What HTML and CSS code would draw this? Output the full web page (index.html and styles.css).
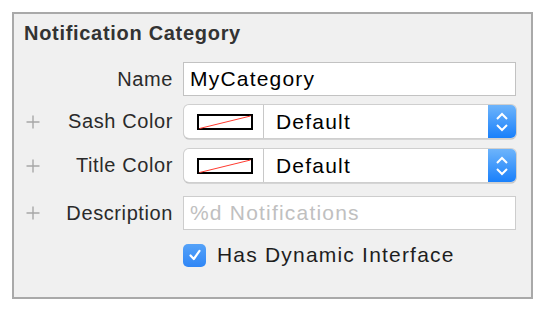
FILE: index.html
```html
<!DOCTYPE html>
<html>
<head>
<meta charset="utf-8">
<link rel="stylesheet" href="styles.css">
</head>
<body>
<div class="panel">
  <div class="title">Notification Category</div>
  <div class="row row-name">
    <span class="plus"></span>
    <span class="label">Name</span>
    <div class="field"><span class="value">MyCategory</span></div>
  </div>
  <div class="row row-sash">
    <span class="plus"><svg width="14" height="14" viewBox="0 0 14 14"><path d="M7 0.5V13.5M0.5 7H13.5" stroke="#a7a7a7" stroke-width="1.4"/></svg></span>
    <span class="label">Sash Color</span>
    <div class="popup">
      <div class="swatch-cell">
        <svg class="swatch" width="56" height="16" viewBox="0 0 56 16"><rect x="1" y="1" width="54" height="14" fill="#fff" stroke="#000" stroke-width="2"/><path d="M2.5 14.5L53.5 2" stroke="#ff3b30" stroke-width="1"/></svg>
      </div>
      <div class="popup-text">Default</div>
      <div class="stepper"><svg width="14" height="20" viewBox="0 0 14 20"><path d="M2 7L7 2L12 7M2 13L7 18L12 13" fill="none" stroke="#fff" stroke-width="2"/></svg></div>
    </div>
  </div>
  <div class="row row-title">
    <span class="plus"><svg width="14" height="14" viewBox="0 0 14 14"><path d="M7 0.5V13.5M0.5 7H13.5" stroke="#a7a7a7" stroke-width="1.4"/></svg></span>
    <span class="label">Title Color</span>
    <div class="popup">
      <div class="swatch-cell">
        <svg class="swatch" width="56" height="16" viewBox="0 0 56 16"><rect x="1" y="1" width="54" height="14" fill="#fff" stroke="#000" stroke-width="2"/><path d="M2.5 14.5L53.5 2" stroke="#ff3b30" stroke-width="1"/></svg>
      </div>
      <div class="popup-text">Default</div>
      <div class="stepper"><svg width="14" height="20" viewBox="0 0 14 20"><path d="M2 7L7 2L12 7M2 13L7 18L12 13" fill="none" stroke="#fff" stroke-width="2"/></svg></div>
    </div>
  </div>
  <div class="row row-desc">
    <span class="plus"><svg width="14" height="14" viewBox="0 0 14 14"><path d="M7 0.5V13.5M0.5 7H13.5" stroke="#a7a7a7" stroke-width="1.4"/></svg></span>
    <span class="label">Description</span>
    <div class="field field-light"><span class="placeholder">%d Notifications</span></div>
  </div>
  <div class="row row-check">
    <span class="plus"></span>
    <span class="label"></span>
    <div class="check-wrap">
      <span class="checkbox"><svg width="14" height="14" viewBox="0 0 14 14"><path d="M2.5 7.5L5.8 11L11.5 2.8" fill="none" stroke="#fff" stroke-width="2.2" stroke-linecap="round" stroke-linejoin="round"/></svg></span>
      <span class="check-label">Has Dynamic Interface</span>
    </div>
  </div>
</div>
</body>
</html>
```
FILE: styles.css
```css
html, body {
  margin: 0;
  padding: 0;
  background: #ffffff;
}
body {
  font-family: "Liberation Sans", Arial, sans-serif;
}
.panel {
  margin: 12px 0 0 12px;
  width: 517px;
  height: 283px;
  border: 2px solid #a9a9a9;
  background: #f0f0f0;
  box-sizing: content-box;
}
.title {
  padding: 7px 0 0 10px;
  height: 27px;
  font-size: 20px;
  font-weight: bold;
  letter-spacing: 0.7px;
  color: #333333;
  line-height: 24px;
}
.row {
  display: flex;
  align-items: center;
  padding: 0 15px 0 10px;
}
.plus {
  width: 18px;
  flex: none;
  display: flex;
  justify-content: center;
}
.plus svg { display: block; }
.label {
  flex: 1;
  text-align: right;
  font-size: 20px;
  letter-spacing: 0.6px;
  color: #2a2a2a;
  padding-right: 10px;
}
.field {
  width: 333px;
  height: 34px;
  box-sizing: border-box;
  background: #ffffff;
  border: 1px solid #c2c2c2;
  display: flex;
  align-items: center;
  padding-left: 6px;
  font-size: 21px;
  letter-spacing: 1.2px;
}
.field-light { border-color: #cdcdcd; }
.value { color: #000000; }
.placeholder { color: #c0c0c0; }
.row-name { margin-top: 14px; }
.row-sash { margin-top: 9px; }
.row-title { margin-top: 11px; }
.row-desc { margin-top: 14px; }
.row-check { margin-top: 13px; }
.popup {
  width: 332px;
  height: 33px;
  margin-left: 1px;
  box-sizing: border-box;
  display: flex;
  background: #ffffff;
  border-radius: 5px;
  box-shadow: 0 0 0 1px #cfcfcf, 0 1px 0 0.5px #b9b9b9;
  overflow: hidden;
}
.swatch-cell {
  width: 80px;
  flex: none;
  display: flex;
  align-items: center;
  justify-content: center;
  border-right: 1px solid #c8c8c8;
  padding-left: 2px;
  box-sizing: border-box;
}
.swatch { display: block; }
.popup-text {
  flex: 1;
  display: flex;
  align-items: center;
  padding-left: 12px;
  font-size: 21px;
  letter-spacing: 1.2px;
  color: #000000;
}
.stepper {
  width: 28px;
  flex: none;
  display: flex;
  align-items: center;
  justify-content: center;
  background: linear-gradient(#6db4fb, #1a80fb);
}
.stepper svg { display: block; }
.check-wrap {
  width: 333px;
  display: flex;
  align-items: center;
  margin-left: -3px;
  height: 24px;
}
.checkbox {
  width: 23px;
  height: 23px;
  border-radius: 5px;
  background: linear-gradient(#55a2f8, #2f86f6);
  display: flex;
  align-items: center;
  justify-content: center;
  flex: none;
}
.checkbox svg { display: block; }
.check-label {
  margin-left: 11px;
  font-size: 21px;
  letter-spacing: 1.2px;
  color: #1e1e1e;
}
```
